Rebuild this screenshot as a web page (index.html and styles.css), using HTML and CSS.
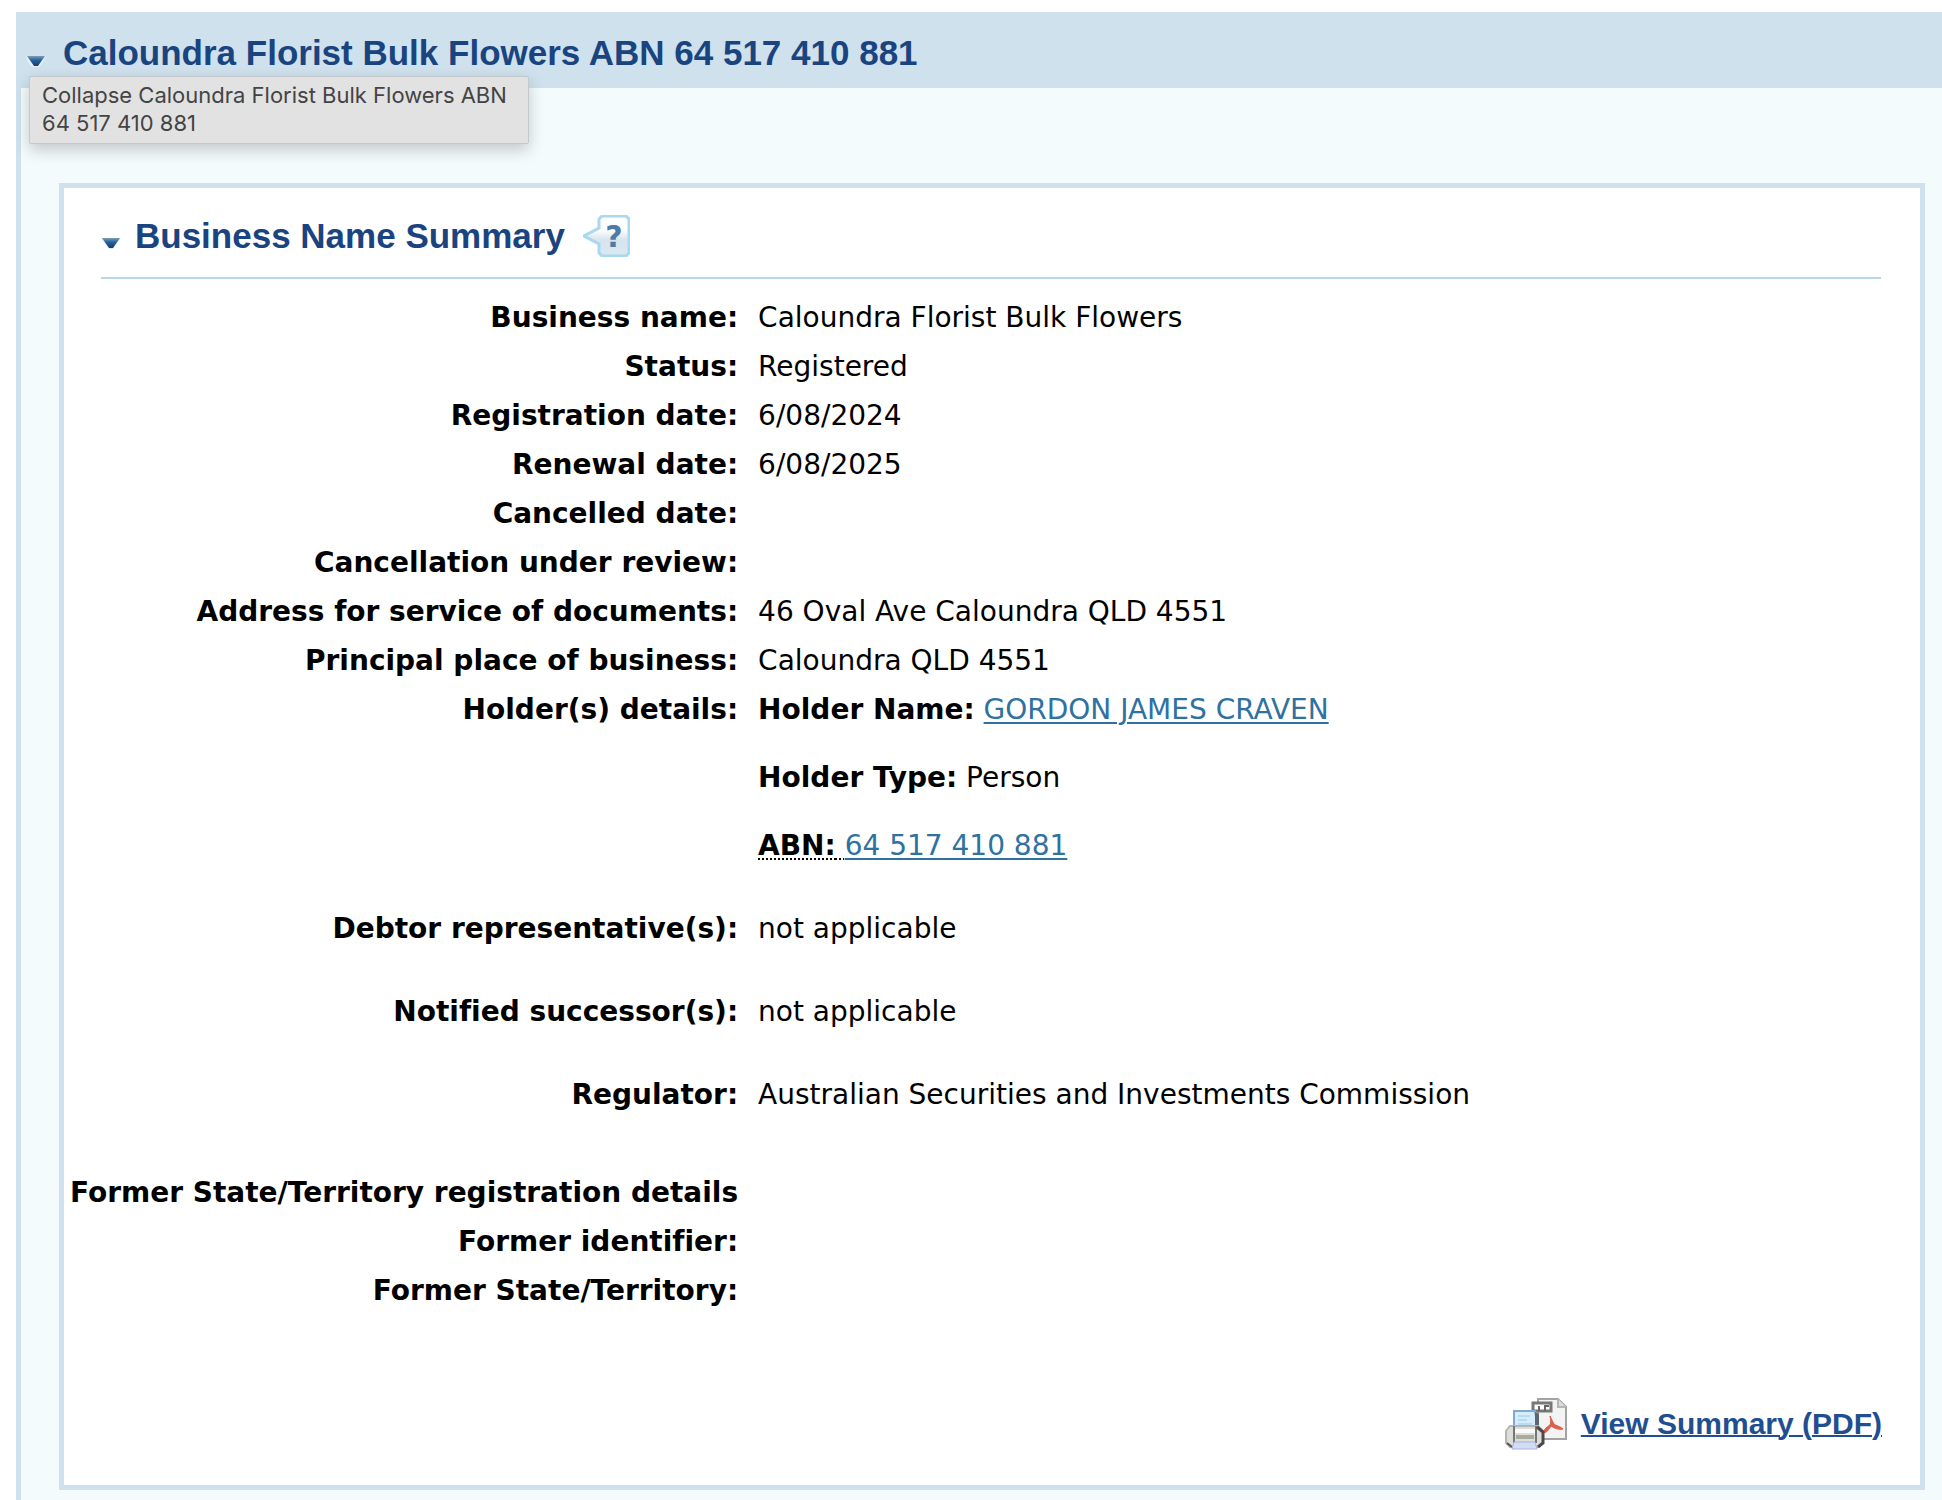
FILE: index.html
```
<!DOCTYPE html>
<html lang="en">
<head>
<meta charset="UTF-8">
<title>Caloundra Florist Bulk Flowers ABN 64 517 410 881</title>
<link rel="stylesheet" href="styles.css">
</head>
<body>
<main class="record">
    <header class="record-header">
        <div class="toggle-wrap">
            <button type="button" class="toggle" aria-expanded="true" aria-label="Collapse record" aria-describedby="toggle-tip">
                <svg class="arrow" viewBox="0 0 20 11">
                    <defs>
                        <linearGradient id="arrow-fill" x1="0" y1="0" x2="0" y2="1">
                            <stop offset="0" stop-color="#7f9fae"/>
                            <stop offset="0.4" stop-color="#2563a3"/>
                            <stop offset="1" stop-color="#123e66"/>
                        </linearGradient>
                    </defs>
                    <path d="M0 0h20l-3 6-4 5H6L2 6z" fill="#fff" opacity="0.5"/>
                    <path d="M1 0h18l-7 10H8z" fill="url(#arrow-fill)"/>
                </svg>
            </button>
            <div id="toggle-tip" class="tooltip" role="tooltip">Collapse Caloundra Florist Bulk Flowers ABN 64 517 410 881</div>
        </div>
        <h1>Caloundra Florist Bulk Flowers ABN 64 517 410 881</h1>
    </header>

    <section class="panel">
        <div class="panel-header">
            <button type="button" class="toggle" aria-expanded="true" aria-label="Collapse Business Name Summary">
                <svg class="arrow" viewBox="0 0 20 11">
                    <path d="M0 0h20l-8 11H8z" fill="#c4dcec" opacity="0.6"/>
                    <path d="M1 0h18l-7 10H8z" fill="url(#arrow-fill)"/>
                </svg>
            </button>
            <h2>Business Name Summary</h2>
            <button type="button" class="help" aria-label="Help">
                <svg class="help-bubble" viewBox="0 0 47 42">
                    <defs>
                        <linearGradient id="help-fill" x1="0" y1="0" x2="0" y2="1">
                            <stop offset="0.35" stop-color="#fdfeff"/>
                            <stop offset="0.6" stop-color="#d5e4ed"/>
                            <stop offset="1" stop-color="#dce9f1"/>
                        </linearGradient>
                    </defs>
                    <path d="M19 1h24l3 3v34l-3 3H19l-3-3v-9L1 21l15-8V4z" fill="url(#help-fill)" stroke="#a9d8ef" stroke-width="3"/>
                    <text x="31" y="32" text-anchor="middle" class="help-mark">?</text>
                </svg>
            </button>
        </div>

        <table class="details">
            <tr><th scope="row">Business name:</th><td>Caloundra Florist Bulk Flowers</td></tr>
            <tr><th scope="row">Status:</th><td>Registered</td></tr>
            <tr><th scope="row">Registration date:</th><td>6/08/2024</td></tr>
            <tr><th scope="row">Renewal date:</th><td>6/08/2025</td></tr>
            <tr><th scope="row">Cancelled date:</th><td></td></tr>
            <tr><th scope="row">Cancellation under review:</th><td></td></tr>
            <tr><th scope="row">Address for service of documents:</th><td>46 Oval Ave Caloundra QLD 4551</td></tr>
            <tr><th scope="row">Principal place of business:</th><td>Caloundra QLD 4551</td></tr>
            <tr>
                <th scope="row">Holder(s) details:</th>
                <td>
                    <p><strong>Holder Name:</strong> <a href="#holder">GORDON JAMES CRAVEN</a></p>
                    <p><strong>Holder Type:</strong> Person</p>
                    <p><abbr title="Australian Business Number"><strong>ABN:</strong> </abbr><a href="#abn">64 517 410 881</a></p>
                </td>
            </tr>
            <tr><th scope="row">Debtor representative(s):</th><td><p>not applicable</p></td></tr>
            <tr><th scope="row">Notified successor(s):</th><td><p>not applicable</p></td></tr>
            <tr><th scope="row">Regulator:</th><td>Australian Securities and Investments Commission</td></tr>
            <tr class="spacer"><td colspan="2"></td></tr>
            <tr><th scope="row">Former State/Territory registration details</th><td></td></tr>
            <tr><th scope="row">Former identifier:</th><td></td></tr>
            <tr><th scope="row">Former State/Territory:</th><td></td></tr>
        </table>

        <div class="panel-footer">
            <svg class="print-icon" viewBox="0 0 62 52">
                <!-- pdf page -->
                <path d="M33 1h20l8 8v32H33z" fill="#f3f3f3" stroke="#a3a3a3" stroke-width="2"/>
                <path d="M53 1v8h8" fill="#ddd" stroke="#b5b5b5" stroke-width="2"/>
                <path d="M45 18c2 4 3 7 5 9 3 1 6 2 8 4-5 1-9-1-12-3-2 3-4 7-8 7 1-4 4-6 7-8 1-3 1-6 0-9z" fill="#e0604b" stroke="#dd5742" stroke-width="1"/>
                <path d="M28 5h18v8H28z" fill="#fff" stroke="#777" stroke-width="3"/>
                <path d="M34 13V8M40 13V8h4" fill="none" stroke="#666" stroke-width="2"/>
                <!-- printer -->
                <path d="M9 13h21l3 18H9z" fill="#d5edfb" stroke="#85a8cd" stroke-width="2"/>
                <path d="M13 18h12M13 22h9M13 26h14" stroke="#b3dcf2" stroke-width="2"/>
                <path d="M30 14l4 2v13l-4 2z" fill="#5b6874"/>
                <path d="M5 28h28l5 5v12l-5 4H5l-4-4V33z" fill="#ddddda" stroke="#b5b5b2" stroke-width="2"/>
                <path d="M9 28v17M31 28v17" stroke="#777" stroke-width="2"/>
                <path d="M10 31h20v4H10z" fill="#fafafa"/>
                <path d="M11 37h18v4H11z" fill="#aaa9a0"/>
                <path d="M32 29l6 5v11l-5 4" fill="none" stroke="#4a4a4a" stroke-width="3"/>
                <path d="M2 45l5 4" stroke="#555" stroke-width="2"/>
                <path d="M9 44h21l2 7H7z" fill="#d3dcf5" stroke="#a7b3d8" stroke-width="1"/>
            </svg>
            <a href="#pdf">View Summary (PDF)</a>
        </div>
    </section>
</main>
</body>
</html>
```
FILE: styles.css
```
* {
    box-sizing: border-box;
}
body {
    margin: 12px 0 0 16px;
    background-color: #fff;
    font: 28px/34px "DejaVu Sans", Verdana, sans-serif;
    font-variant-ligatures: none;
    color: #000;
}
h1, h2, p {
    margin: 0;
}
h1, h2 {
    font: bold 35px/44px "Liberation Sans", Arial, sans-serif;
    color: #1a4480;
}
button {
    padding: 0;
    border: none;
    background: none;
    cursor: pointer;
}

/* outer record box */
.record {
    min-height: calc(100vh - 12px);
    padding-bottom: 38px;
    border-left: 5px solid #cee1ec;
    background-color: #f3fbfd;
}
.record-header {
    display: flex;
    align-items: center;
    gap: 17px;
    height: 76px;
    margin-left: -5px;
    padding: 6px 10px 0;
    background-color: #cee1ec;
}
.toggle-wrap {
    position: relative;
}
.toggle {
    display: block;
    padding-top: 16px;
}
.arrow {
    display: block;
    width: 20px;
    height: 11px;
}
.tooltip {
    position: absolute;
    z-index: 10;
    top: 36px;
    left: 3px;
    width: 500px;
    padding: 4px 12px 6px;
    border: 1px solid #c3c9cc;
    border-radius: 2px;
    background-color: #e2e2e2;
    box-shadow: 0 6px 16px rgba(0, 0, 0, 0.2);
    font: 22px/28px Inter, sans-serif;
    color: #444;
}

/* summary panel */
.panel {
    margin: 95px 17px 0 38px;
    border: 5px solid #cee1ec;
    background-color: #fff;
}
.panel-header {
    display: flex;
    align-items: center;
    gap: 14px;
    height: 91px;
    margin: 0 39px 15px 37px;
    padding-top: 6px;
    border-bottom: 2px solid #b9d7eb;
}
.panel-header h2 {
    margin-right: 4px;
}
.help-bubble {
    display: block;
    width: 47px;
    height: 42px;
}
.help-mark {
    font: bold 30px "DejaVu Sans", Verdana, sans-serif;
    fill: #4f7aa6;
}

/* label and value rows */
.details {
    width: 100%;
    border-collapse: collapse;
}
.details th, .details td {
    height: 49px;
    padding: 7px 6px 8px;
    text-align: left;
    vertical-align: top;
}
.details th {
    width: 37%;
    padding-right: 14px;
    text-align: right;
    white-space: nowrap;
}
.details p {
    margin-bottom: 34px;
}
.details a {
    color: #2f719f;
    text-underline-offset: 3px;
    text-decoration-thickness: 2px;
}
.details abbr {
    text-decoration: underline dotted 2px;
    text-underline-offset: 3px;
}

.panel-footer {
    display: flex;
    justify-content: flex-end;
    align-items: center;
    gap: 14px;
    padding: 82px 38px 35px;
    font: bold 30px/36px "Liberation Sans", Arial, sans-serif;
}
.panel-footer a {
    color: #1f4f91;
    text-decoration-thickness: 2px;
}
.print-icon {
    width: 62px;
    height: 52px;
}
```
